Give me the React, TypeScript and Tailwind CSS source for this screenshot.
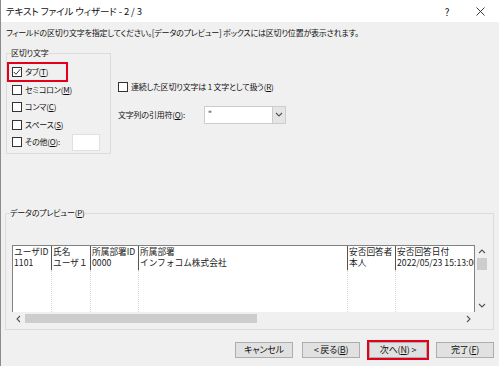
import React from "react";

const U = ({ c }: { c: string }) => (
  <span className="underline underline-offset-[1px] decoration-[1px]">{c}</span>
);

function Check({ checked = false }: { checked?: boolean }) {
  return (
    <span className="w-[10px] h-[10px] border border-[#333333] bg-white flex items-center justify-center shrink-0">
      {checked && (
        <svg width="8" height="8" viewBox="0 0 8 8">
          <polyline points="0.8,4 3,6.3 7.3,1.2" fill="none" stroke="#222" strokeWidth="0.9" />
        </svg>
      )}
    </span>
  );
}

function Chevron({ dir }: { dir: "up" | "down" | "left" | "right" }) {
  const pts: Record<string, string> = {
    up: "1,5 4,2 7,5",
    down: "1,2 4,5 7,2",
    left: "5,1 2,4 5,7",
    right: "2,1 5,4 2,7",
  };
  return (
    <svg width="8" height="8" viewBox="0 0 8 8">
      <polyline points={pts[dir]} fill="none" stroke="#555" strokeWidth="1.1" />
    </svg>
  );
}

const cols = [
  { w: "w-[38px]", h: "ユーザID", v: "1101", first: true },
  { w: "w-[39px]", h: "氏名", v: "ユーザ１" },
  { w: "w-[48px]", h: "所属部署ID", v: "0000" },
  { w: "w-[209px]", h: "所属部署", v: "インフォコム株式会社" },
  { w: "w-[48px]", h: "安否回答者", v: "本人" },
  { w: "w-[100px]", h: "安否回答日付", v: "2022/05/23 15:13:00" },
];

export default function App() {
  return (
    <div className="w-[499px] h-[366px] bg-[#f0f0f0] border-l border-[#8c8c8c] overflow-hidden flex flex-col text-[#111] font-['Noto_Sans_CJK_JP',sans-serif] [font-feature-settings:'palt'] text-[8px] tracking-[-0.2px]">
      {/* Title bar */}
      <div className="h-[22px] bg-white flex items-center shrink-0">
        <span className="pl-[5px] text-[9.5px] leading-[12px] tracking-[-0.1px]">テキスト ファイル ウィザード - 2 / 3</span>
        <span className="ml-auto text-[10px] w-[10px] text-center mr-[24px]">?</span>
        <span className="mr-[14px] flex items-center">
          <svg width="9" height="9" viewBox="0 0 9 9">
            <path d="M0.5 0.5 L8.5 8.5 M8.5 0.5 L0.5 8.5" stroke="#222" strokeWidth="0.9" />
          </svg>
        </span>
      </div>

      {/* Instruction */}
      <div className="mt-[5px] pl-[5px] leading-[12px]">
        フィールドの区切り文字を指定してください。[データのプレビュー] ボックスには区切り位置が表示されます。
      </div>

      {/* Upper area */}
      <div className="mt-[8px] flex">
        <fieldset className="ml-[5px] w-[105px] h-[107px] border border-[#dcdcdc] p-0 m-0">
          <legend className="ml-[4px] px-0 leading-[12px]">区切り文字</legend>
          <div className="flex flex-col">
            <div className="mt-[3px] w-[61px] h-[20px] border-2 border-[#e3001b] flex items-center pl-[3px] gap-[3px]">
              <Check checked />
              <span className="leading-[12px]">
                タブ(<U c="T" />)
              </span>
            </div>
            {[
              ["セミコロン(", "M", ")"],
              ["コンマ(", "C", ")"],
              ["スペース(", "S", ")"],
            ].map(([a, b, c], i) => (
              <div key={i} className={`h-[17.5px] flex items-center pl-[5px] gap-[3px] ${i === 0 ? "-mt-[1px]" : ""}`}>
                <Check />
                <span className="leading-[12px]">
                  {a}
                  <U c={b} />
                  {c}
                </span>
              </div>
            ))}
            <div className="h-[17.5px] flex items-center pl-[5px] gap-[3px]">
              <Check />
              <span className="leading-[12px] w-[44px]">
                その他(<U c="O" />):
              </span>
              <span className="w-[28px] h-[17px] bg-white border border-[#e0e0e0]" />
            </div>
          </div>
        </fieldset>

        <div className="ml-[7px] flex flex-col">
          <div className="mt-[32px] h-[16px] flex items-center gap-[3px]">
            <Check />
            <span className="leading-[12px]">
              連続した区切り文字は 1 文字として扱う(<U c="R" />)
            </span>
          </div>
          <div className="mt-[11px] flex items-center">
            <span className="leading-[12px] w-[86px]">
              文字列の引用符(<U c="Q" />):
            </span>
            <div className="w-[82px] h-[18px] bg-white border border-[#cccccc] flex">
              <span className="pl-[3px] leading-[14px]">"</span>
              <span className="ml-auto w-[13px] h-full bg-[#e5e5e5] border-l border-[#cccccc] flex items-center justify-center">
                <Chevron dir="down" />
              </span>
            </div>
          </div>
        </div>
      </div>

      {/* Preview */}
      <fieldset className="mt-[53px] ml-[4px] w-[489px] h-[123px] border border-[#dcdcdc] p-0 m-0">
        <legend className="ml-[4px] px-0 leading-[12px]">
          データのプレビュー(<U c="P" />)
        </legend>
        <div className="mt-[26px] ml-[6px] flex flex-col w-[476px]">
          <div className="flex h-[67px]">
            <div className="w-[463px] h-full bg-white border border-[#828282] border-b-0 flex overflow-hidden font-['Noto_Sans_CJK_JP',sans-serif] [font-feature-settings:normal] tracking-normal text-[8.7px] leading-[11px] text-[#222]">
              {cols.map((c, i) => (
                <div key={i} className={`${c.w} shrink-0 flex flex-col h-full`}>
                  <div className={`h-[24px] whitespace-nowrap overflow-hidden pl-[1px] ${c.first ? "" : "border-l border-[#555]"}`}>
                    <div>{c.h}</div>
                    <div>{c.v}</div>
                  </div>
                  <div className={`flex-1 ${c.first ? "" : "border-l border-dotted border-[#d8d8d8]"}`} />
                </div>
              ))}
            </div>
            <div className="w-[13px] h-full flex flex-col items-center">
              <div className="h-[13px] flex items-center justify-center">
                <Chevron dir="up" />
              </div>
              <div className="w-[10px] h-[12px] bg-[#cdcdcd]" />
              <div className="mt-auto h-[13px] flex items-center justify-center">
                <Chevron dir="down" />
              </div>
            </div>
          </div>
          <div className="h-[13px] flex items-center w-[463px]">
            <span className="w-[13px] flex items-center justify-center">
              <Chevron dir="left" />
            </span>
            <span className="w-[232px] h-[9px] bg-[#cdcdcd]" />
            <span className="ml-auto w-[13px] flex items-center justify-center">
              <Chevron dir="right" />
            </span>
          </div>
        </div>
      </fieldset>

      {/* Buttons */}
      <div className="mt-[12px] flex justify-end gap-[9px] pr-[5px] text-[9px]">
        <button className="w-[58px] h-[16px] bg-[#e1e1e1] border border-[#adadad] leading-[12px]">キャンセル</button>
        <button className="w-[58px] h-[16px] bg-[#e1e1e1] border border-[#adadad] leading-[12px]">
          &lt; 戻る(<U c="B" />)
        </button>
        <div className="-mx-[2px] -my-[2px] border-2 border-[#e3001b]">
          <button className="w-[58px] h-[16px] bg-[#e1e1e1] border border-[#adadad] leading-[12px] block">
            次へ(<U c="N" />) &gt;
          </button>
        </div>
        <button className="w-[58px] h-[16px] bg-[#e1e1e1] border border-[#adadad] leading-[12px]">
          完了(<U c="F" />)
        </button>
      </div>
    </div>
  );
}
